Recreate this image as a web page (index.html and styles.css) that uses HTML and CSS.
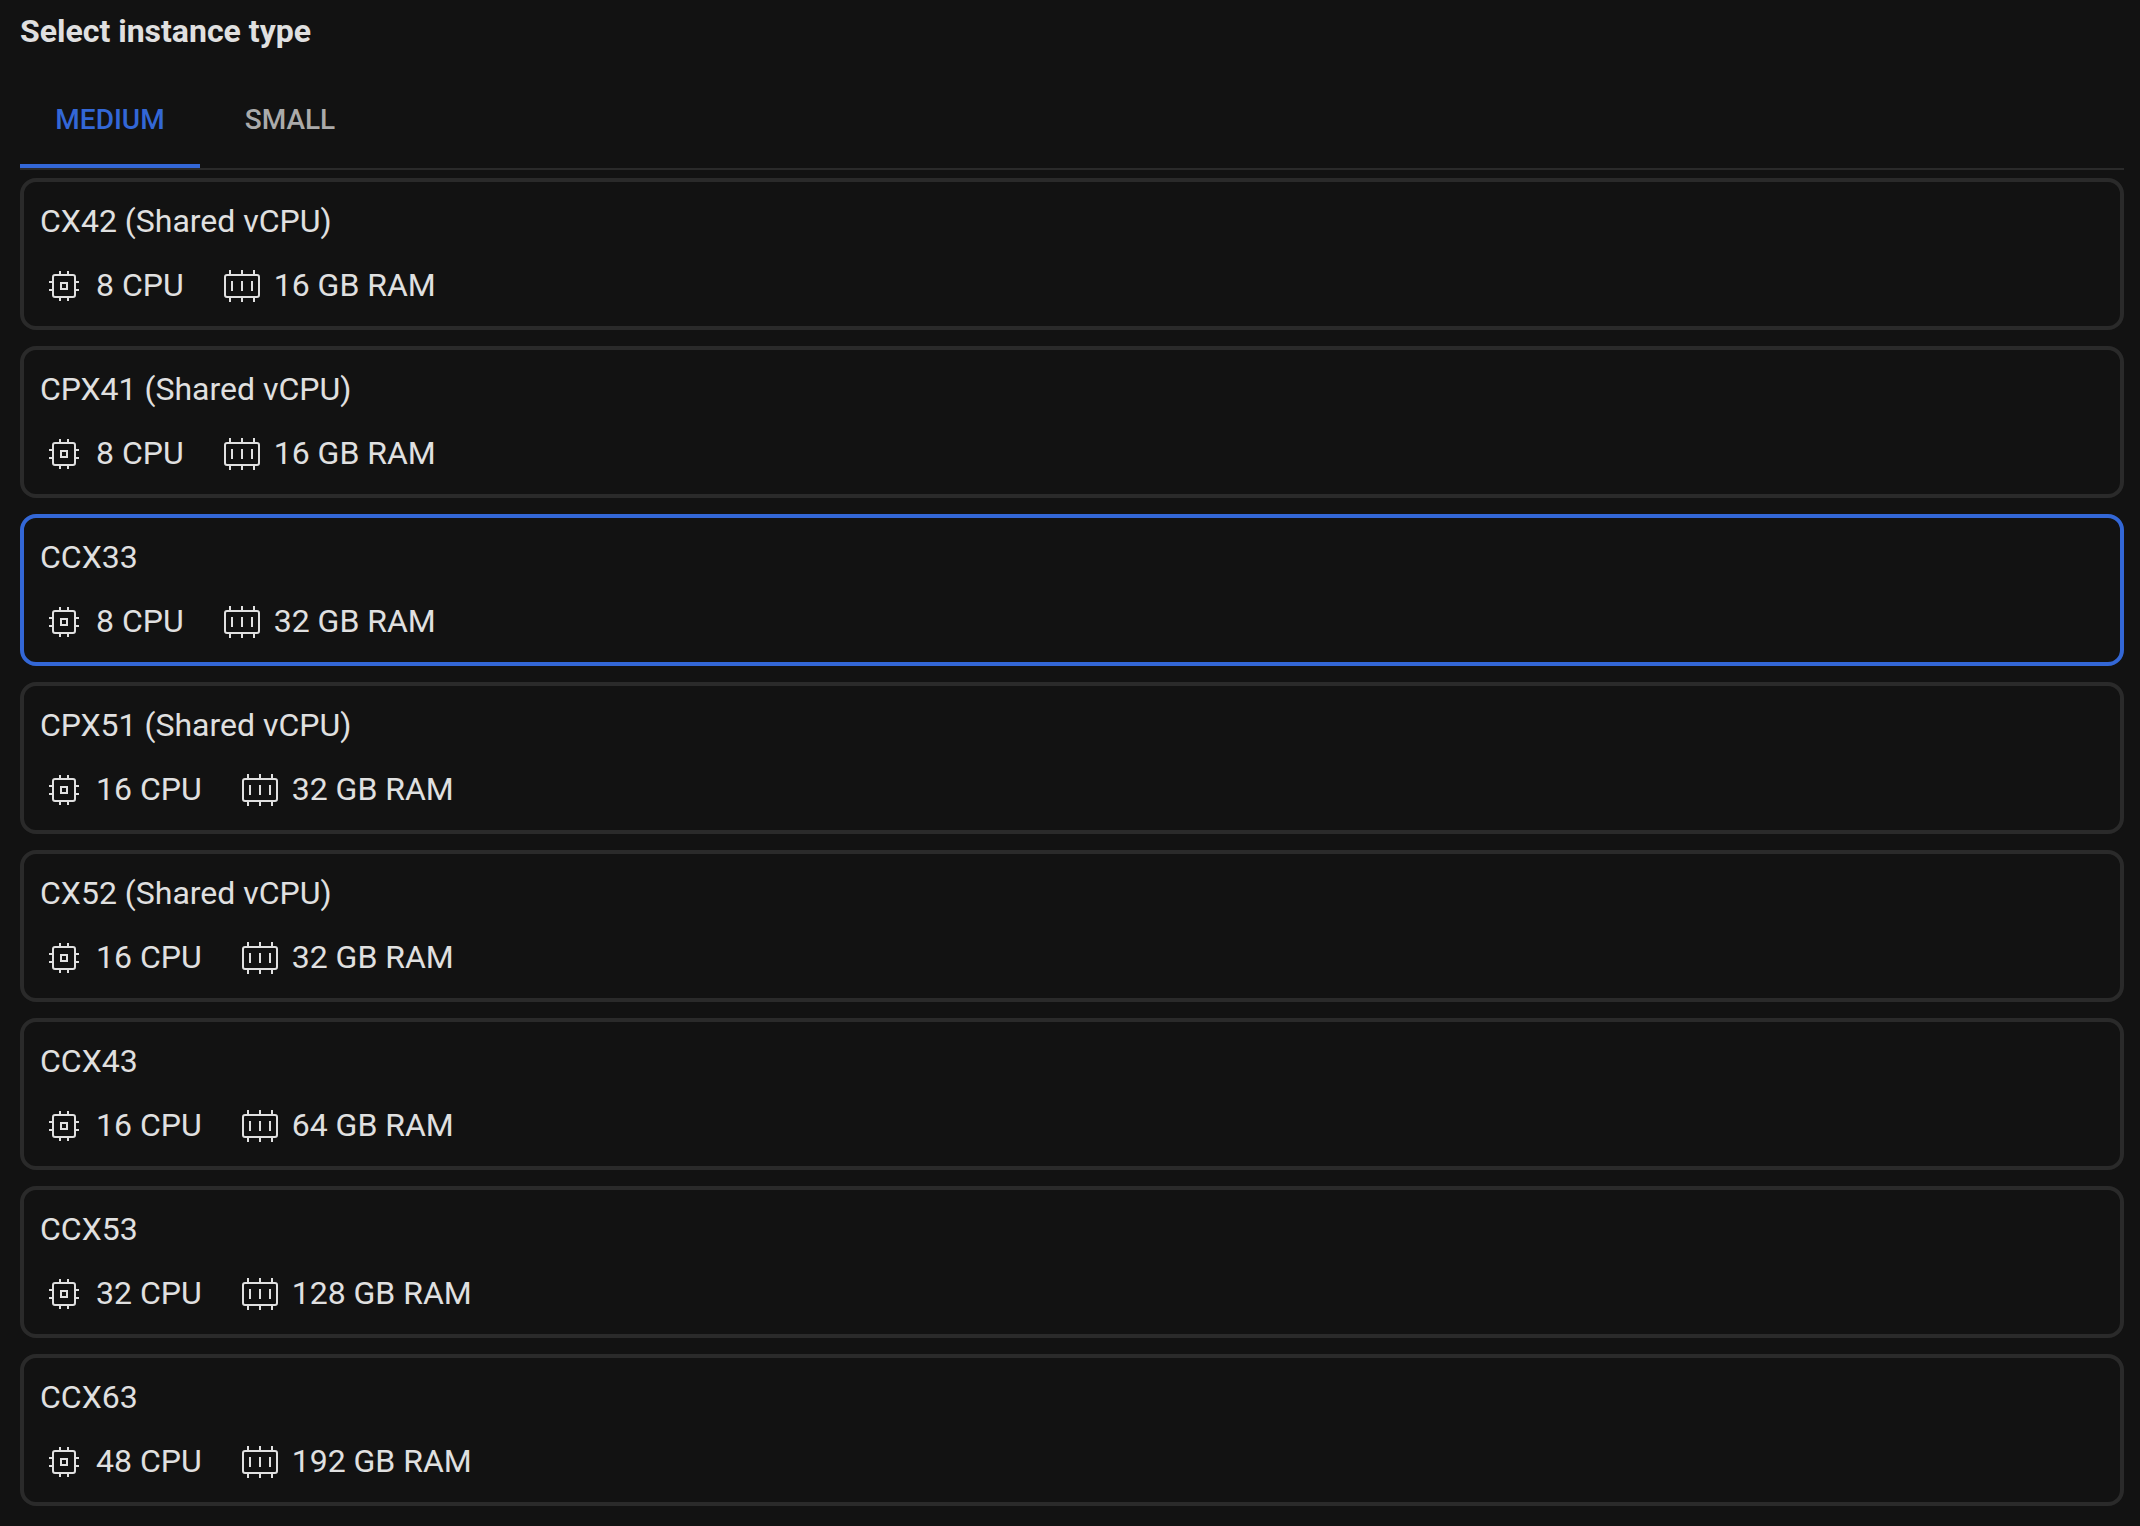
FILE: index.html
```html
<!DOCTYPE html>
<html lang="en">
<head>
<meta charset="utf-8">
<meta name="viewport" content="width=device-width, initial-scale=1">
<title>Select instance type</title>
<link rel="stylesheet" href="styles.css">
</head>
<body>
<svg class="sprite" aria-hidden="true">
  <symbol id="icon-cpu" viewBox="0 0 48 48">
    <rect x="13" y="13" width="22" height="22" rx="2"/>
    <rect x="21" y="21" width="6" height="6"/>
    <path d="M20 9v3M28 9v3M20 36v3M28 36v3M9 20h3M9 28h3M36 20h3M36 28h3"/>
  </symbol>
  <symbol id="icon-ram" viewBox="0 0 48 48">
    <rect x="7" y="13" width="34" height="22" rx="2"/>
    <path d="M12 8v4M24 8v4M36 8v4M12 36v4M24 36v4M36 36v4M14 19v10M24 19v10M34 19v10"/>
  </symbol>
</svg>
<main class="panel">
  <h1 class="heading">Select instance type</h1>
  <div class="tabs" role="tablist">
    <button class="tab tab-active" type="button" role="tab" aria-selected="true">MEDIUM</button>
    <button class="tab" type="button" role="tab" aria-selected="false">SMALL</button>
  </div>
  <div class="options" role="radiogroup" aria-label="Instance type">
    <label class="card">
      <input class="card-input" type="radio" name="instance" value="cx42">
      <span class="card-title">CX42 (Shared vCPU)</span>
      <span class="specs">
        <span class="spec"><svg class="icon"><use href="#icon-cpu"/></svg>8 CPU</span>
        <span class="spec"><svg class="icon"><use href="#icon-ram"/></svg>16 GB RAM</span>
      </span>
    </label>
    <label class="card">
      <input class="card-input" type="radio" name="instance" value="cpx41">
      <span class="card-title">CPX41 (Shared vCPU)</span>
      <span class="specs">
        <span class="spec"><svg class="icon"><use href="#icon-cpu"/></svg>8 CPU</span>
        <span class="spec"><svg class="icon"><use href="#icon-ram"/></svg>16 GB RAM</span>
      </span>
    </label>
    <label class="card">
      <input class="card-input" type="radio" name="instance" value="ccx33" checked>
      <span class="card-title">CCX33</span>
      <span class="specs">
        <span class="spec"><svg class="icon"><use href="#icon-cpu"/></svg>8 CPU</span>
        <span class="spec"><svg class="icon"><use href="#icon-ram"/></svg>32 GB RAM</span>
      </span>
    </label>
    <label class="card">
      <input class="card-input" type="radio" name="instance" value="cpx51">
      <span class="card-title">CPX51 (Shared vCPU)</span>
      <span class="specs">
        <span class="spec"><svg class="icon"><use href="#icon-cpu"/></svg>16 CPU</span>
        <span class="spec"><svg class="icon"><use href="#icon-ram"/></svg>32 GB RAM</span>
      </span>
    </label>
    <label class="card">
      <input class="card-input" type="radio" name="instance" value="cx52">
      <span class="card-title">CX52 (Shared vCPU)</span>
      <span class="specs">
        <span class="spec"><svg class="icon"><use href="#icon-cpu"/></svg>16 CPU</span>
        <span class="spec"><svg class="icon"><use href="#icon-ram"/></svg>32 GB RAM</span>
      </span>
    </label>
    <label class="card">
      <input class="card-input" type="radio" name="instance" value="ccx43">
      <span class="card-title">CCX43</span>
      <span class="specs">
        <span class="spec"><svg class="icon"><use href="#icon-cpu"/></svg>16 CPU</span>
        <span class="spec"><svg class="icon"><use href="#icon-ram"/></svg>64 GB RAM</span>
      </span>
    </label>
    <label class="card">
      <input class="card-input" type="radio" name="instance" value="ccx53">
      <span class="card-title">CCX53</span>
      <span class="specs">
        <span class="spec"><svg class="icon"><use href="#icon-cpu"/></svg>32 CPU</span>
        <span class="spec"><svg class="icon"><use href="#icon-ram"/></svg>128 GB RAM</span>
      </span>
    </label>
    <label class="card">
      <input class="card-input" type="radio" name="instance" value="ccx63">
      <span class="card-title">CCX63</span>
      <span class="specs">
        <span class="spec"><svg class="icon"><use href="#icon-cpu"/></svg>48 CPU</span>
        <span class="spec"><svg class="icon"><use href="#icon-ram"/></svg>192 GB RAM</span>
      </span>
    </label>
  </div>
</main>
</body>
</html>
```

FILE: styles.css
```css
* {
  box-sizing: border-box;
}

body {
  margin: 0;
  background: #121212;
  color: #e0e0e0;
  font-family: Roboto, "Liberation Sans", sans-serif;
  font-size: 32px;
  line-height: 46px;
}

.sprite {
  position: absolute;
  width: 0;
  height: 0;
}

.panel {
  padding: 8px 16px 20px 20px;
}

.heading {
  margin: 0 0 18px;
  font-size: 32px;
  font-weight: 700;
  line-height: 46px;
}

.tabs {
  display: flex;
  margin-bottom: 8px;
  border-bottom: 2px solid #2a2a2a;
}

.tab {
  min-width: 180px;
  height: 96px;
  padding: 4px 32px 0;
  border: 0;
  border-bottom: 4px solid transparent;
  background: none;
  color: #aaaaaa;
  font-family: inherit;
  font-size: 28px;
  font-weight: 500;
  line-height: 36px;
  cursor: pointer;
}

.tab-active {
  border-bottom-color: #3367d6;
  color: #3367d6;
}

.options {
  display: flex;
  flex-direction: column;
  gap: 16px;
}

.card {
  position: relative;
  display: flex;
  flex-direction: column;
  gap: 18px;
  padding: 16px;
  border: 4px solid #2a2a2a;
  border-radius: 16px;
  cursor: pointer;
}

.card:has(.card-input:checked) {
  border-color: #3367d6;
}

.card-input {
  position: absolute;
  inset: 0;
  margin: 0;
  opacity: 0;
}

.specs {
  display: flex;
  gap: 34px;
}

.spec {
  display: flex;
  align-items: flex-start;
  gap: 8px;
}

.icon {
  width: 48px;
  height: 48px;
  fill: none;
  stroke: currentColor;
  stroke-width: 2px;
}
```
